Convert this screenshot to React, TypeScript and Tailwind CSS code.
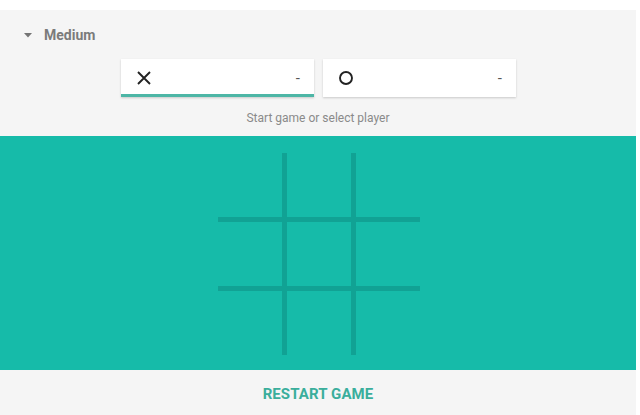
import React from "react";

function PlayerCard({ mark, active }: { mark: "x" | "o"; active?: boolean }) {
  return (
    <div className="relative flex h-[38px] w-[193px] items-center justify-between bg-white pl-[15px] pr-[14px] shadow-[0_1px_2px_rgba(0,0,0,0.18)]">
      {mark === "x" ? (
        <svg width="16" height="16" viewBox="0 0 16 16">
          <path d="M2 2 L14 14 M14 2 L2 14" stroke="#222" strokeWidth="1.9" />
        </svg>
      ) : (
        <svg width="16" height="16" viewBox="0 0 16 16">
          <circle cx="8" cy="8" r="6" fill="none" stroke="#222" strokeWidth="1.9" />
        </svg>
      )}
      <span className="text-[15px] leading-none text-[#555]">-</span>
      {active && <div className="absolute bottom-0 left-0 right-0 h-[3px] bg-[#4db6a6]" />}
    </div>
  );
}

export default function App() {
  return (
    <div className="h-[415px] w-[640px] bg-white font-['Roboto',sans-serif]">
      <div className="ml-0 mt-[10px] flex h-[405px] w-[636px] flex-col bg-[#f5f5f5]">
        <div className="flex h-[49px] items-center gap-[12px] pl-[24px] pt-[1px]">
          <svg width="8" height="5" viewBox="0 0 8 5">
            <path d="M0 0 L8 0 L4 4.5 Z" fill="#757575" />
          </svg>
          <span className="text-[14px] font-bold text-[#7b7b7b]">Medium</span>
        </div>
        <div className="flex justify-center gap-[9px] pl-[1px]">
          <PlayerCard mark="x" active />
          <PlayerCard mark="o" />
        </div>
        <div className="mt-[12px] h-[27px] text-center text-[12px] text-[#8a8a8a]">
          Start game or select player
        </div>
        <div className="flex h-[234px] items-center justify-center bg-[#16bba9]">
          <div className="ml-[2px] mt-[2px] grid grid-cols-[64px_5px_64px_5px_64px] grid-rows-[64px_5px_64px_5px_64px]">
            {Array.from({ length: 25 }).map((_, i) => {
              const r = Math.floor(i / 5);
              const c = i % 5;
              const line = r % 2 === 1 || c % 2 === 1;
              return <div key={i} className={line ? "bg-[#11a294]" : ""} />;
            })}
          </div>
        </div>
        <div className="flex flex-1 items-center justify-center pt-[3px]">
          <span className="text-[15px] font-bold tracking-[0.1px] text-[#3aae9c]">RESTART GAME</span>
        </div>
      </div>
    </div>
  );
}
